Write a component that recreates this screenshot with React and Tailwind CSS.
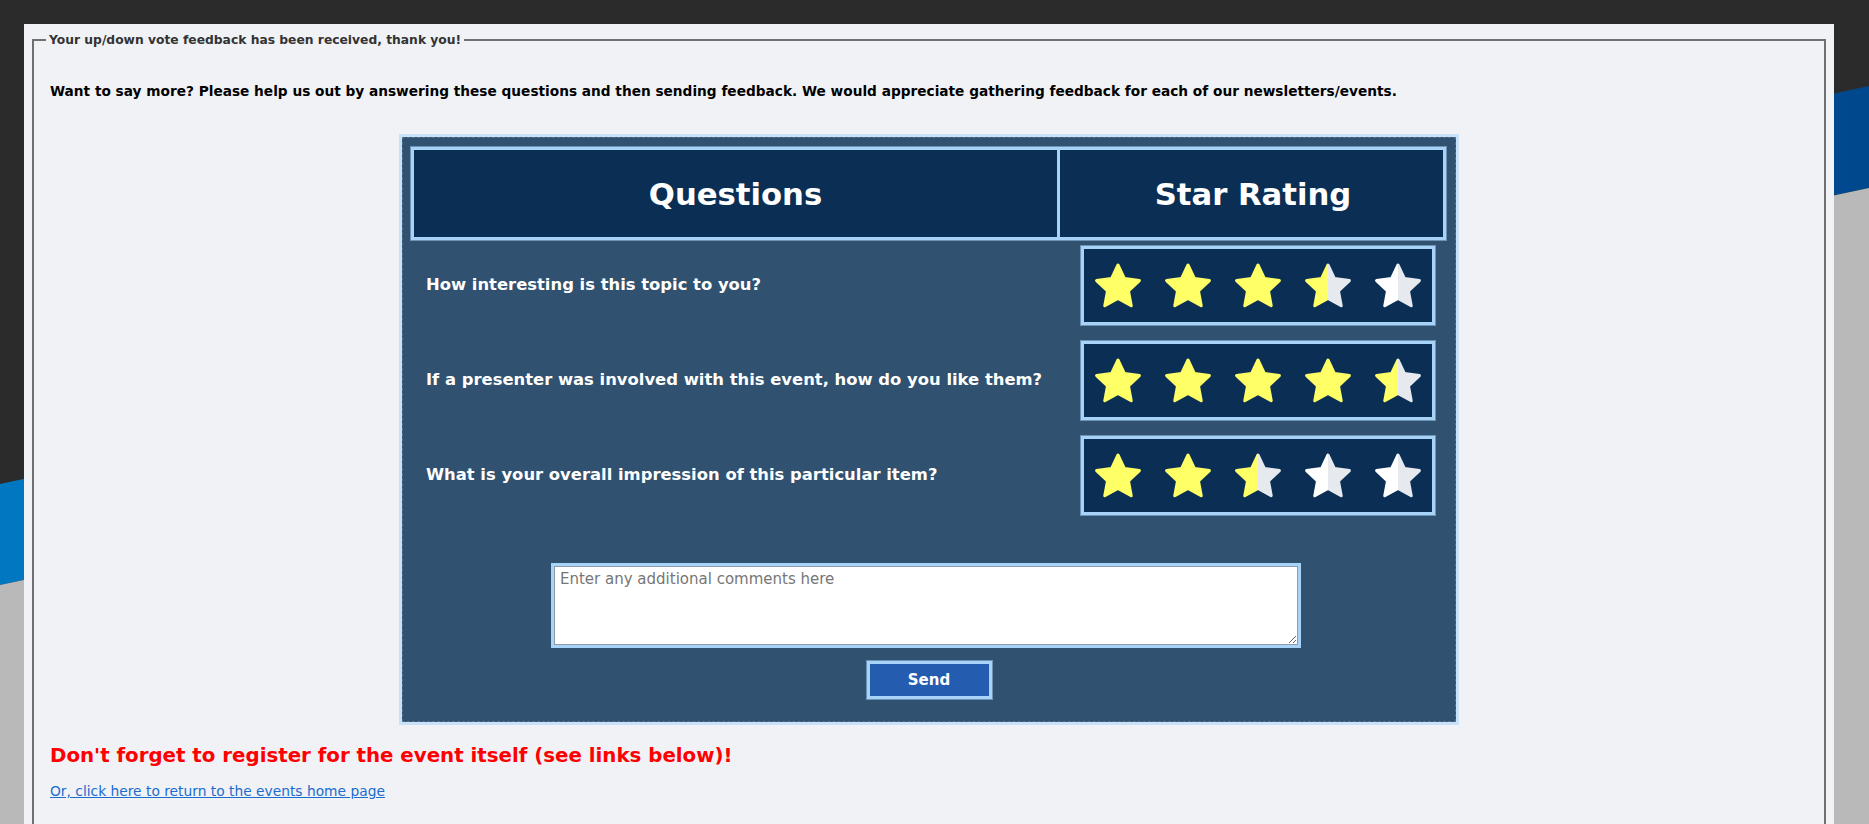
import React from 'react';

const QUESTIONS = [
  { text: 'How interesting is this topic to you?', stars: ['full', 'full', 'full', 'half', 'empty'] },
  { text: 'If a presenter was involved with this event, how do you like them?', stars: ['full', 'full', 'full', 'full', 'half'] },
  { text: 'What is your overall impression of this particular item?', stars: ['full', 'full', 'half', 'empty', 'empty'] },
];

// five-point star, slightly fat inner radius, rounded tips come from the stroke join
const starPoints = (() => {
  const cx = 24, cy = 25.5, R = 22.5, r = R * 0.49;
  const pts = [];
  for (let i = 0; i < 10; i++) {
    const rad = i % 2 === 0 ? R : r;
    const a = ((-90 + i * 36) * Math.PI) / 180;
    pts.push(`${(cx + rad * Math.cos(a)).toFixed(2)},${(cy + rad * Math.sin(a)).toFixed(2)}`);
  }
  return pts.join(' ');
})();

function Star({ kind }) {
  return (
    <svg width="48" height="48" viewBox="0 0 48 48">
      <polygon
        points={starPoints}
        fill={`url(#star-${kind})`}
        stroke={`url(#star-${kind})`}
        strokeWidth="3"
        strokeLinejoin="round"
      />
    </svg>
  );
}

function StarGradients() {
  return (
    <svg width="0" height="0" className="absolute">
      <defs>
        <linearGradient id="star-full" x1="0" y1="0" x2="1" y2="0">
          <stop offset="0" stopColor="#ffff66" />
          <stop offset="1" stopColor="#ffff66" />
        </linearGradient>
        <linearGradient id="star-half" x1="0" y1="0" x2="1" y2="0">
          <stop offset="0.5" stopColor="#ffff66" />
          <stop offset="0.5" stopColor="#e6e9ed" />
        </linearGradient>
        <linearGradient id="star-empty" x1="0" y1="0" x2="1" y2="0">
          <stop offset="0.5" stopColor="#ffffff" />
          <stop offset="0.5" stopColor="#e6e9ed" />
        </linearGradient>
      </defs>
    </svg>
  );
}

function Backdrop() {
  return (
    <svg className="absolute inset-0 w-full h-full" viewBox="0 0 1869 824" preserveAspectRatio="none">
      <defs>
        <linearGradient id="band" x1="0" y1="0" x2="1" y2="0">
          <stop offset="0" stopColor="#0078c1" />
          <stop offset="1" stopColor="#00488d" />
        </linearGradient>
      </defs>
      <rect width="1869" height="824" fill="#2b2b2b" />
      <polygon points="0,484 1869,86 1869,188 0,585" fill="url(#band)" />
      <polygon points="0,585 1869,188 1869,824 0,824" fill="#b9b9b9" />
    </svg>
  );
}

export default function App() {
  return (
    <div className="relative h-[824px] overflow-hidden font-['DejaVu_Sans',Verdana,sans-serif]">
      <Backdrop />
      <StarGradients />

      <div className="relative ml-[24px] mt-[24px] w-[1810px] h-[820px] bg-[#f0f2f6] px-[8px] pt-[8px]">
        <fieldset className="border-2 border-[#707070] pl-[12px] pr-[12px] h-[900px]">
          <legend className="px-[3px] text-[12.3px] leading-[16px] font-bold text-[#333333]">
            Your up/down vote feedback has been received, thank you!
          </legend>

          <p className="mt-[35px] pl-[4px] text-[13.7px] leading-[16px] font-bold text-black">
            Want to say more? Please help us out by answering these questions and then sending feedback. We would appreciate gathering feedback for each of our newsletters/events.
          </p>

          {/* rating table */}
          <div className="mx-auto mt-[35px] w-[1060px] border-[3px] border-[#c8e2f9]">
            <div className="border border-dashed border-[#55708c] bg-[#30516f] pl-[8px] pr-[9px] pt-[9px] pb-[22px]">
              <div className="grid grid-cols-[643px_389px] h-[93px] bg-[#0b2f54] border-[3px] border-[#a8d3f8] outline outline-1 outline-[#6f93b5]">
                <div className="flex items-center justify-center pt-[3px] text-white font-bold text-[30.7px]">Questions</div>
                <div className="flex items-center justify-center pt-[3px] border-l-[3px] border-[#a8d3f8] text-white font-bold text-[30.7px]">Star Rating</div>
              </div>

              <div className="mt-[6px] flex flex-col gap-[16px]">
                {QUESTIONS.map((q) => (
                  <div key={q.text} className="flex items-center">
                    <div className="w-[670px] pl-[15px] text-white font-bold text-[16.4px]">{q.text}</div>
                    <div className="w-[354px] h-[79px] flex items-center justify-between px-[10px] bg-[#0b2f54] border-[3px] border-[#a8d3f8] outline outline-1 outline-[#6f93b5]">
                      {q.stars.map((s, i) => (
                        <Star key={i} kind={s} />
                      ))}
                    </div>
                  </div>
                ))}
              </div>

              <div className="mt-[48px] flex flex-col items-center">
                <div className="w-[750px] h-[85px] border-[3px] border-[#a8d3f8] -ml-[5px]">
                  <textarea
                    className="block w-full h-full bg-white border border-[#8c9cab] px-[5px] py-[3px] text-[15px] leading-[18px] text-black placeholder:text-[#767676] resize-y outline-none"
                    placeholder="Enter any additional comments here"
                  />
                </div>
                <button
                  type="button"
                  className="mt-[13px] ml-[1px] w-[125px] h-[38px] bg-[#245cb0] border-[3px] border-[#a8d3f8] outline outline-1 outline-[#6f93b5] text-white font-bold text-[15px]"
                >
                  Send
                </button>
              </div>
            </div>
          </div>

          <h3 className="mt-[19px] pl-[4px] text-[19.8px] leading-[24px] font-bold text-[#ff0000]">
            Don't forget to register for the event itself (see links below)!
          </h3>
          <a href="#" className="block mt-[15px] pl-[4px] text-[13.8px] leading-[17px] text-[#1b6ccd] underline">
            Or, click here to return to the events home page
          </a>
        </fieldset>
      </div>
    </div>
  );
}
